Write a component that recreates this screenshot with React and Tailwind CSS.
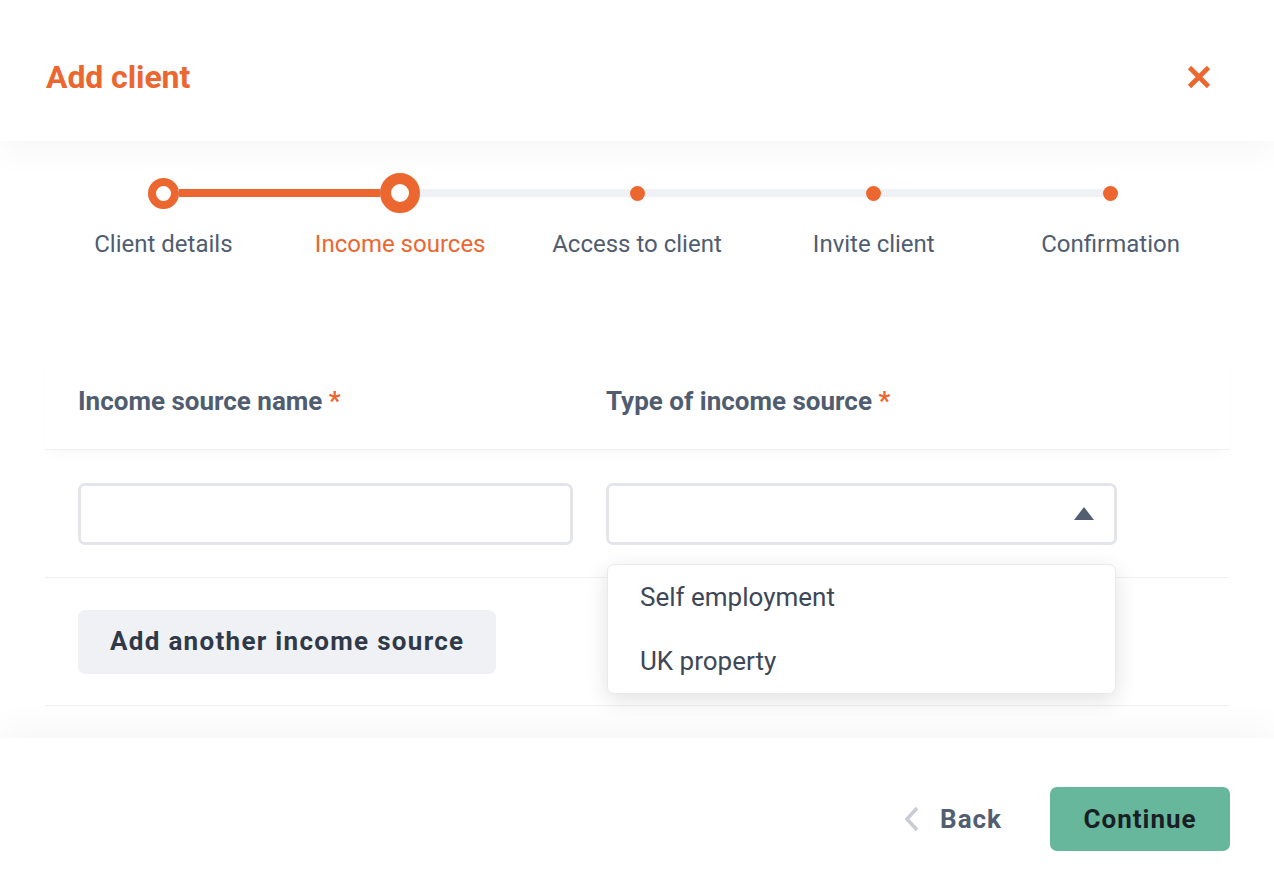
import { useState } from 'react';

const STEPS = ['Client details', 'Income sources', 'Access to client', 'Invite client', 'Confirmation'];
const CURRENT = 1;

function StepNode({ index }) {
  if (index < CURRENT) {
    return <div className="h-[31px] w-[31px] shrink-0 rounded-full border-[8px] border-[#EC662F] bg-white" />;
  }
  if (index === CURRENT) {
    return <div className="h-[40px] w-[40px] shrink-0 rounded-full border-[11px] border-[#EC662F] bg-white" />;
  }
  return <div className="h-[15px] w-[15px] shrink-0 rounded-full bg-[#EC662F]" />;
}

function Stepper() {
  return (
    <div className="grid grid-cols-5 px-[45px]">
      {STEPS.map((label, i) => {
        const leftColor = i === 0 ? 'bg-transparent' : i <= CURRENT ? 'bg-[#EC662F]' : 'bg-[#F0F1F5]';
        const rightColor = i === STEPS.length - 1 ? 'bg-transparent' : i < CURRENT ? 'bg-[#EC662F]' : 'bg-[#F0F1F5]';
        return (
          <div key={label} className="flex flex-col items-center">
            <div className="flex h-[40px] w-full items-center">
              <div className={`h-[8px] flex-1 ${leftColor}`} />
              <StepNode index={i} />
              <div className={`h-[8px] flex-1 ${rightColor}`} />
            </div>
            <p
              className={`mt-[17px] whitespace-nowrap text-[24px] leading-[28px] ${
                i === CURRENT ? 'text-[#EC662F]' : 'text-[#505D70]'
              }`}
            >
              {label}
            </p>
          </div>
        );
      })}
    </div>
  );
}

export default function App() {
  const [open] = useState(true);

  return (
    <div className="flex min-h-[894px] w-full flex-col bg-white font-['Roboto',sans-serif] text-[#505D70]">
      <header className="relative z-10 flex h-[141px] items-center justify-between bg-white pl-[46px] pr-[62px] pt-[13px] shadow-[0_12px_32px_rgba(0,0,0,0.035)]">
        <h1 className="text-[32px] font-bold tracking-[-0.1px] text-[#EC662F]">Add client</h1>
        <button type="button" aria-label="Close" className="text-[#EC662F]">
          <svg width="26" height="26" viewBox="0 0 26 26" fill="none" stroke="currentColor" strokeWidth="4.6">
            <path d="M3.5 3.5L22.5 22.5M22.5 3.5L3.5 22.5" />
          </svg>
        </button>
      </header>

      <main className="flex-1 bg-white pb-[32px] pt-[32px]">
        <Stepper />

        <div className="mx-[45px] mt-[96px]">
          <div className="flex h-[96px] items-center border-b border-[#EEF0F3] px-[33px] shadow-[0_8px_14px_-6px_rgba(0,0,0,0.04)]">
            <div className="w-[495px] text-[26px] font-bold text-[#505D70]">
              Income source name <span className="text-[#EC662F]">*</span>
            </div>
            <div className="ml-[33px] w-[511px] text-[26px] font-bold text-[#505D70]">
              Type of income source <span className="text-[#EC662F]">*</span>
            </div>
          </div>

          <div className="flex h-[128px] items-center border-b border-[#EEF0F3] px-[33px]">
            <input
              type="text"
              className="h-[62px] w-[495px] rounded-[7px] border-[3px] border-[#E3E5EA] bg-white px-4 text-[22px] outline-none"
            />
            <div className="relative ml-[33px] w-[511px]">
              <button
                type="button"
                className="flex h-[62px] w-full items-center justify-end rounded-[7px] border-[3px] border-[#E3E5EA] bg-white pr-[20px]"
              >
                <svg width="20" height="13" viewBox="0 0 20 13">
                  <path d="M10 0L20 13H0Z" fill="#525F73" />
                </svg>
              </button>
              {open && (
                <ul className="absolute left-[1px] top-[81px] z-20 w-[509px] rounded-[7px] border border-[#E8EAEE] bg-white shadow-[0_6px_22px_rgba(0,0,0,0.12)]">
                  <li className="flex h-[64px] items-center px-[32px] pt-[2px] text-[26px] text-[#3E4756]">Self employment</li>
                  <li className="flex h-[64px] items-center px-[32px] pt-[2px] text-[26px] text-[#3E4756]">UK property</li>
                </ul>
              )}
            </div>
          </div>

          <div className="flex h-[128px] items-center border-b border-[#EEF0F3] px-[33px]">
            <button
              type="button"
              className="h-[64px] whitespace-nowrap rounded-[7px] bg-[#F0F1F5] px-[32px] text-[26px] font-bold tracking-[1.3px] text-[#2F3947]"
            >
              Add another income source
            </button>
          </div>
        </div>
      </main>

      <footer className="relative flex h-[156px] items-start justify-end gap-[48px] bg-white pr-[44px] pt-[49px] shadow-[0_-12px_32px_rgba(0,0,0,0.035)]">
        <button type="button" className="flex h-[64px] items-center gap-[20px] text-[26px] font-bold tracking-[1px] text-[#525E71]">
          <svg width="16" height="26" viewBox="0 0 16 26" fill="none" stroke="#C8CDD5" strokeWidth="3.5">
            <path d="M13 2L3 13L13 24" />
          </svg>
          Back
        </button>
        <button
          type="button"
          className="h-[64px] w-[180px] rounded-[7px] bg-[#66B79C] text-[26px] font-bold tracking-[1px] text-[#1A1F26]"
        >
          Continue
        </button>
      </footer>
    </div>
  );
}
